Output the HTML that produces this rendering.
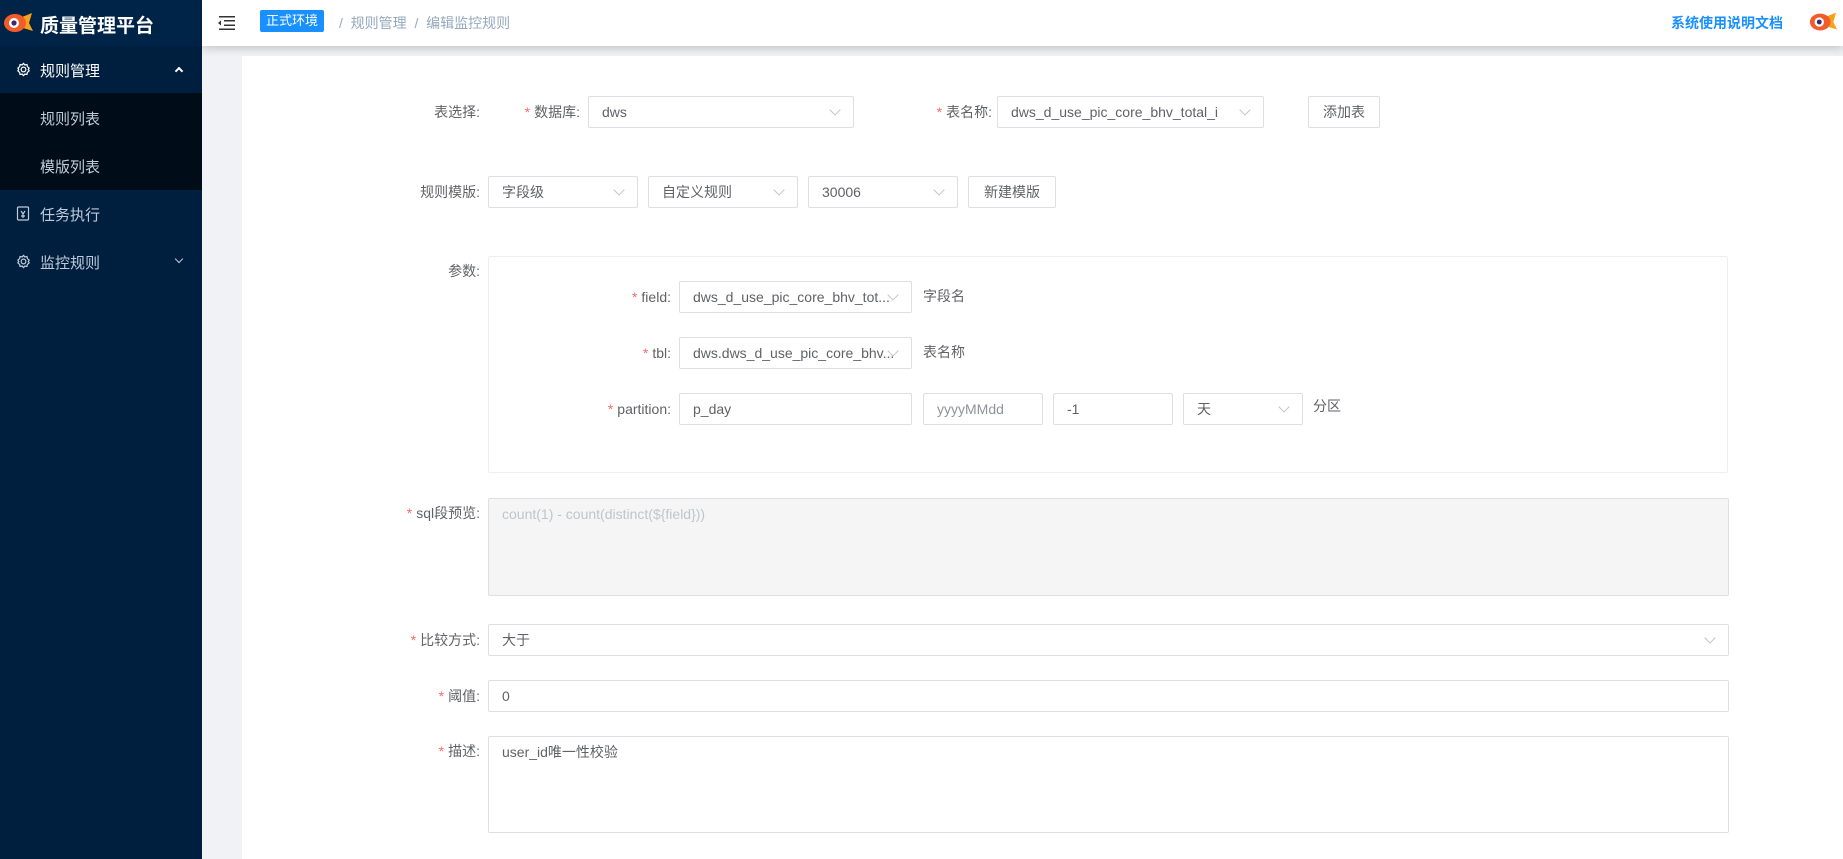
<!DOCTYPE html>
<html><head><meta charset="utf-8"><style>
*{box-sizing:border-box;margin:0;padding:0}
body{width:1843px;height:859px;overflow:hidden;background:#f0f2f5;font-family:"Liberation Sans","Noto Sans CJK SC",sans-serif;font-size:14px;color:#606266;position:relative}
.abs{position:absolute}
.side{left:0;top:0;width:202px;height:859px;background:#001f3f}
.logo{left:0;top:0;width:202px;height:46px;background:#002448}
.menu{color:#bfcbd9;font-size:15px}
.hdr{left:202px;top:0;width:1641px;height:46px;background:#fff;box-shadow:0 3px 8px rgba(0,0,0,.18)}
.card{left:242px;top:56px;width:1601px;height:803px;background:#fff}
.lbl{text-align:right;color:#606266;font-size:14px;line-height:32px;white-space:nowrap}
.lbl i{color:#f56c6c;font-style:normal;margin-right:4px}
.in{border:1px solid #dcdfe6;border-radius:2px;background:#fff;height:32px;line-height:30px;padding-left:13px;font-size:14px;color:#606266;white-space:nowrap;overflow:hidden}
.sel::after{content:"";position:absolute;right:14px;top:9px;width:7px;height:7px;border-right:1px solid #c0c4cc;border-bottom:1px solid #c0c4cc;transform:rotate(45deg)}
.btn{border:1px solid #dcdfe6;border-radius:2px;background:#fff;height:32px;line-height:30px;text-align:center;font-size:14px;color:#606266}
</style></head><body>
<div class="abs side"></div>
<div class="abs logo"></div>
<svg class="abs" style="left:2px;top:11px" width="32" height="24" viewBox="0 0 32 24"><path d="M20 6 L30 2 L27 12 L31 20 L21 17Z" fill="#f7a21b"/><ellipse cx="13" cy="12" rx="11" ry="9" fill="#f25c2a"/><circle cx="12" cy="12" r="5" fill="#fff"/><circle cx="12" cy="12" r="2.6" fill="#3a2a6a"/></svg>
<div class="abs" style="left:40px;top:11px;color:#fff;font-size:19px;font-weight:bold">质量管理平台</div>
<div class="abs" style="left:0;top:93px;width:202px;height:97px;background:#000c17"></div>
<svg class="abs" style="left:16px;top:62px" width="15" height="15" viewBox="0 0 16 16" fill="none" stroke="#fff" stroke-width="1.3"><circle cx="8" cy="8" r="2.5"/><path d="M8 1.5l1.5 1.6 2.2-.4.4 2.2L14 6.5l-.9 1.5.9 1.5-1.9 1.6-.4 2.2-2.2-.4L8 14.5l-1.5-1.6-2.2.4-.4-2.2L2 9.5l.9-1.5L2 6.5l1.9-1.6.4-2.2 2.2.4z"/></svg>
<div class="abs" style="left:40px;top:60px;color:#fff;font-size:15px">规则管理</div>
<div class="abs" style="left:176px;top:68px;width:6px;height:6px;border-left:2px solid #fff;border-top:2px solid #fff;transform:rotate(45deg)"></div>
<div class="abs menu" style="left:40px;top:108px">规则列表</div>
<div class="abs menu" style="left:40px;top:156px">模版列表</div>
<svg class="abs" style="left:16px;top:206px" width="14" height="15" viewBox="0 0 14 15" fill="none" stroke="#bfcbd9" stroke-width="1.2"><rect x="1.5" y="1" width="11" height="13" rx="1"/><path d="M5 5l2 3 2-3M7 8v4M5 10h4"/></svg>
<div class="abs menu" style="left:40px;top:204px">任务执行</div>
<svg class="abs" style="left:16px;top:254px" width="15" height="15" viewBox="0 0 16 16" fill="none" stroke="#bfcbd9" stroke-width="1.3"><circle cx="8" cy="8" r="2.5"/><path d="M8 1.5l1.5 1.6 2.2-.4.4 2.2L14 6.5l-.9 1.5.9 1.5-1.9 1.6-.4 2.2-2.2-.4L8 14.5l-1.5-1.6-2.2.4-.4-2.2L2 9.5l.9-1.5L2 6.5l1.9-1.6.4-2.2 2.2.4z"/></svg>
<div class="abs menu" style="left:40px;top:252px">监控规则</div>
<div class="abs" style="left:176px;top:256px;width:6px;height:6px;border-right:1.5px solid #bfcbd9;border-bottom:1.5px solid #bfcbd9;transform:rotate(45deg)"></div>

<div class="abs hdr"></div>
<svg class="abs" style="left:218px;top:16px" width="17" height="14" viewBox="0 0 17 14" fill="#333"><rect x="1" y="0" width="16" height="1.5"/><rect x="6" y="4" width="11" height="1.5"/><rect x="6" y="8.5" width="11" height="1.5"/><rect x="1" y="12.5" width="16" height="1.5"/><path d="M0 7l3-2.5v5z"/></svg>
<div class="abs" style="left:260px;top:10px;width:64px;height:22px;background:#1890ff;border-radius:2px;color:#fff;font-size:13px;line-height:22px;text-align:center">正式环境</div>
<div class="abs" style="left:339px;top:13px;font-size:14px;color:#97a8be">/&nbsp;&nbsp;规则管理&nbsp;&nbsp;/&nbsp;&nbsp;编辑监控规则</div>
<div class="abs" style="left:1671px;top:13px;font-size:14px;color:#1890ff;font-weight:bold">系统使用说明文档</div>
<svg class="abs" style="left:1808px;top:10px" width="30" height="24" viewBox="0 0 32 24"><path d="M20 6 L30 2 L27 12 L31 20 L21 17Z" fill="#f7a21b"/><ellipse cx="13" cy="12" rx="11" ry="9" fill="#f25c2a"/><circle cx="12" cy="12" r="5" fill="#fff"/><circle cx="12" cy="12" r="2.6" fill="#3a2a6a"/></svg>

<div class="abs card"></div>
<div class="abs lbl" style="right:1363px;top:96px">表选择:</div>
<div class="abs lbl" style="right:1263px;top:96px"><i>*</i>数据库:</div>
<div class="abs in sel" style="left:588px;top:96px;width:266px">dws</div>
<div class="abs lbl" style="right:851px;top:96px"><i>*</i>表名称:</div>
<div class="abs in sel" style="left:997px;top:96px;width:267px">dws_d_use_pic_core_bhv_total_i</div>
<div class="abs btn" style="left:1308px;top:96px;width:72px">添加表</div>
<div class="abs lbl" style="right:1363px;top:176px">规则模版:</div>
<div class="abs in sel" style="left:488px;top:176px;width:150px">字段级</div>
<div class="abs in sel" style="left:648px;top:176px;width:150px">自定义规则</div>
<div class="abs in sel" style="left:808px;top:176px;width:150px">30006</div>
<div class="abs btn" style="left:968px;top:176px;width:88px">新建模版</div>
<div class="abs lbl" style="right:1363px;top:256px;line-height:30px">参数:</div>
<div class="abs" style="left:488px;top:256px;width:1240px;height:217px;border:1px solid #ebeef5;border-radius:2px"></div>
<div class="abs lbl" style="right:1172px;top:281px"><i>*</i>field:</div>
<div class="abs in sel" style="left:679px;top:281px;width:233px">dws_d_use_pic_core_bhv_tot...</div>
<div class="abs" style="left:923px;top:286px">字段名</div>
<div class="abs lbl" style="right:1172px;top:337px"><i>*</i>tbl:</div>
<div class="abs in sel" style="left:679px;top:337px;width:233px">dws.dws_d_use_pic_core_bhv...</div>
<div class="abs" style="left:923px;top:342px">表名称</div>
<div class="abs lbl" style="right:1172px;top:393px"><i>*</i>partition:</div>
<div class="abs in" style="left:679px;top:393px;width:233px">p_day</div>
<div class="abs in" style="left:923px;top:393px;width:120px;color:#909399">yyyyMMdd</div>
<div class="abs in" style="left:1053px;top:393px;width:120px">-1</div>
<div class="abs in sel" style="left:1183px;top:393px;width:120px">天</div>
<div class="abs" style="left:1313px;top:396px">分区</div>
<div class="abs lbl" style="right:1363px;top:498px;line-height:30px"><i>*</i>sql段预览:</div>
<div class="abs in" style="left:488px;top:498px;width:1241px;height:98px;background:#f5f5f5;color:#c0c4cc;line-height:30px">count(1) - count(distinct(${field}))</div>
<div class="abs lbl" style="right:1363px;top:624px"><i>*</i>比较方式:</div>
<div class="abs in sel" style="left:488px;top:624px;width:1241px">大于</div>
<div class="abs lbl" style="right:1363px;top:680px"><i>*</i>阈值:</div>
<div class="abs in" style="left:488px;top:680px;width:1241px">0</div>
<div class="abs lbl" style="right:1363px;top:736px;line-height:30px"><i>*</i>描述:</div>
<div class="abs in" style="left:488px;top:736px;width:1241px;height:97px;line-height:30px">user_id唯一性校验</div>
</body></html>
